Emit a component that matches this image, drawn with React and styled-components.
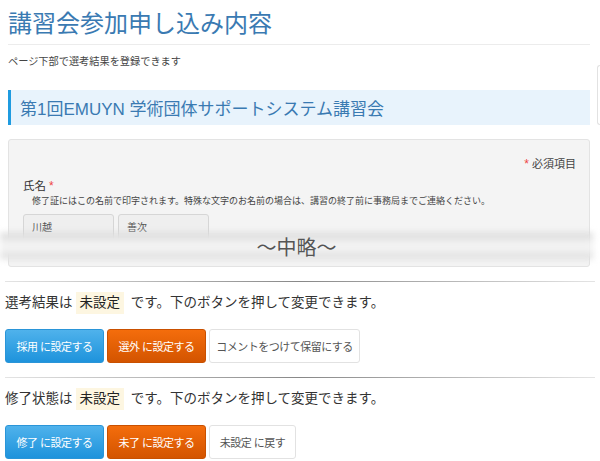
import React from 'react';
import styled, { createGlobalStyle } from 'styled-components';

const GlobalStyle = createGlobalStyle`
  html, body {
    margin: 0;
    padding: 0;
    background: #fff;
    overflow: hidden;
  }
  body {
    font-family: "Liberation Sans", "Noto Sans CJK JP", sans-serif;
    color: #333;
  }
`;

const Page = styled.div`
  width: 600px;
  overflow: hidden;
`;

const TopArea = styled.div`
  display: flex;
  gap: 7px;
  padding-left: 8px;
`;

const MainColumn = styled.div`
  width: 582px;
  flex-shrink: 0;
`;

// edge of a neighbouring panel, cut off by the frame
const SidePeek = styled.div`
  flex-shrink: 0;
  width: 3px;
  height: 60px;
  margin-top: 65px;
  border: 1px solid #e2e2e2;
  border-right: none;
  border-radius: 4px 0 0 4px;
  box-sizing: border-box;
`;

const Title = styled.h1`
  margin: 7px 0 0;
  padding-bottom: 3px;
  font-size: 24px;
  line-height: 34px;
  font-weight: normal;
  color: #3a7ab2;
  border-bottom: 1px solid #ececec;
`;

const Lead = styled.p`
  margin: 9px 0 0;
  font-size: 10.2px;
  line-height: 16px;
  color: #444;
`;

const EventHeading = styled.h2`
  margin: 20px 0 0;
  height: 35px;
  box-sizing: border-box;
  display: flex;
  align-items: center;
  padding-left: 9px;
  background: #e8f3fc;
  border-left: 3px solid #1f9be0;
  font-size: 17px;
  font-weight: normal;
  color: #3a7ab2;
`;

const FormPanel = styled.div`
  position: relative;
  margin-top: 14px;
  height: 128px;
  box-sizing: border-box;
  padding: 16px 13px 0 14px;
  background: #f4f4f4;
  border: 1px solid #e3e3e3;
  border-radius: 3px;
`;

const FormInner = styled.div`
  height: 100%;
  overflow: hidden;
`;

const RequiredNote = styled.div`
  text-align: right;
  font-size: 11px;
  line-height: 16px;
  color: #444;
`;

const Star = styled.span`
  color: #ee4444;
  margin: 0 3px;
  font-size: 12px;
`;

const FieldLabel = styled.div`
  margin-top: 6px;
  font-size: 11.5px;
  line-height: 16px;
  color: #333;
`;

const Help = styled.div`
  padding-left: 9px;
  font-size: 9px;
  line-height: 14px;
  color: #444;
`;

const NameRow = styled.div`
  display: flex;
  gap: 4px;
  margin-top: 6px;
`;

const NameInput = styled.div`
  width: 91px;
  height: 32px;
  box-sizing: border-box;
  padding: 4px 8px;
  background: #efefef;
  border: 1px solid #d6d6d6;
  border-radius: 3px;
  font-size: 10px;
  color: #555;
`;

const Omitted = styled.div`
  position: absolute;
  top: 93px;
  left: -9px;
  right: -4px;
  height: 26px;
  display: flex;
  align-items: center;
  justify-content: center;
  font-size: 20px;
  color: #555;

  &::before {
    content: '';
    position: absolute;
    inset: 0;
    background: linear-gradient(to bottom, #d4d4d4, #f1f1f1 35%, #f5f5f5 60%, #dadada);
    filter: blur(3px);
    z-index: 0;
  }

  span {
    position: relative;
    z-index: 1;
  }
`;

const Section = styled.section`
  padding: 0 5px;
`;

const Rule = styled.hr`
  margin: 14px 0 0;
  border: 0;
  height: 1px;
  background: linear-gradient(to right, #e4e4e4, #888 50%, #e4e4e4);
`;

const Status = styled.p`
  margin: 10px 0 0;
  font-size: 13.5px;
  line-height: 20px;
  color: #333;
`;

const Badge = styled.span`
  display: inline-block;
  margin: 0 3px;
  padding: 0 4px;
  background: #fdf6e1;
  line-height: 22px;
  color: #222;
`;

const ButtonRow = styled.div`
  display: flex;
  gap: 3px;
  margin-top: 15px;
`;

const tones = {
  blue: 'background: linear-gradient(#4fb2ec, #1e93dc); border-color: #2a95d8; color: #fff;',
  orange: 'background: linear-gradient(#f46d0c, #d35400); border-color: #c95000; color: #fff;',
  plain: 'background: #fff; border-color: #e2e2e2; color: #555;',
};

const ActionButton = styled.button`
  width: ${(p) => p.$w}px;
  height: 34px;
  padding: 0;
  border: 1px solid;
  border-radius: 3px;
  font-family: inherit;
  font-size: 11px;
  letter-spacing: -0.5px;
  cursor: pointer;
  ${(p) => tones[p.$tone]}
`;

const App = () => {
  return (
    <>
      <GlobalStyle />
      <Page>
        <TopArea>
          <MainColumn>
            <Title>講習会参加申し込み内容</Title>
            <Lead>ページ下部で選考結果を登録できます</Lead>
            <EventHeading>第1回EMUYN 学術団体サポートシステム講習会</EventHeading>
            <FormPanel>
              <FormInner>
                <RequiredNote>
                  <Star>*</Star>必須項目
                </RequiredNote>
                <FieldLabel>
                  氏名<Star>*</Star>
                </FieldLabel>
                <Help>修了証にはこの名前で印字されます。特殊な文字のお名前の場合は、講習の終了前に事務局までご連絡ください。</Help>
                <NameRow>
                  <NameInput>川越</NameInput>
                  <NameInput>善次</NameInput>
                </NameRow>
              </FormInner>
              <Omitted>
                <span>〜中略〜</span>
              </Omitted>
            </FormPanel>
          </MainColumn>
          <SidePeek />
        </TopArea>

        <Section>
          <Rule />
          <Status>
            選考結果は<Badge>未設定</Badge> です。下のボタンを押して変更できます。
          </Status>
          <ButtonRow>
            <ActionButton $tone="blue" $w={99}>採用 に設定する</ActionButton>
            <ActionButton $tone="orange" $w={99}>選外 に設定する</ActionButton>
            <ActionButton $tone="plain" $w={151}>コメントをつけて保留にする</ActionButton>
          </ButtonRow>
        </Section>

        <Section>
          <Rule />
          <Status>
            修了状態は<Badge>未設定</Badge> です。下のボタンを押して変更できます。
          </Status>
          <ButtonRow>
            <ActionButton $tone="blue" $w={99}>修了 に設定する</ActionButton>
            <ActionButton $tone="orange" $w={99}>未了 に設定する</ActionButton>
            <ActionButton $tone="plain" $w={87}>未設定 に戻す</ActionButton>
          </ButtonRow>
        </Section>
      </Page>
    </>
  );
};

export default App;
